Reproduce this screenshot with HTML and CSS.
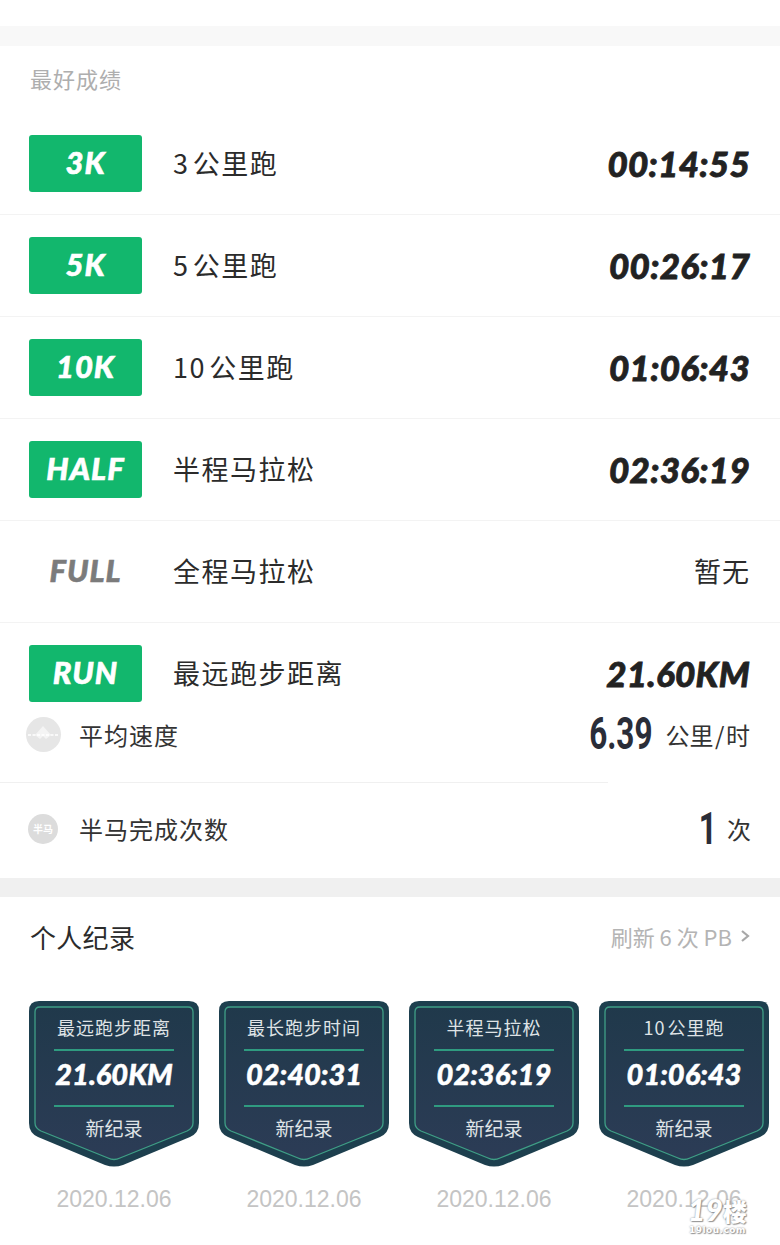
FILE: index.html
```html
<!DOCTYPE html>
<html lang="zh-CN">
  <head>
    <meta charset="UTF-8" />
    <meta name="viewport" content="width=device-width, initial-scale=1.0" />
    <title>最好成绩</title>
    <link rel="stylesheet" href="styles.css">
  </head>
  <body>
    <div class="top-space"></div>
    <div class="band"></div>

    <section class="best">
      <h2 class="best-title">最好成绩</h2>

      <div class="row">
        <span class="tag">3K</span>
        <span class="row-name">3&#8202;公里跑</span>
        <span class="row-value">00:14:55</span>
      </div>
      <div class="row">
        <span class="tag">5K</span>
        <span class="row-name">5&#8202;公里跑</span>
        <span class="row-value">00:26:17</span>
      </div>
      <div class="row">
        <span class="tag">10K</span>
        <span class="row-name">10&#8202;公里跑</span>
        <span class="row-value">01:06:43</span>
      </div>
      <div class="row">
        <span class="tag">HALF</span>
        <span class="row-name">半程马拉松</span>
        <span class="row-value">02:36:19</span>
      </div>
      <div class="row">
        <span class="tag tag-off">FULL</span>
        <span class="row-name">全程马拉松</span>
        <span class="row-none">暂无</span>
      </div>
      <div class="row row-last">
        <span class="tag">RUN</span>
        <span class="row-name">最远跑步距离</span>
        <span class="row-value">21.60KM</span>
      </div>
    </section>

    <section class="stats">
      <div class="stat stat-line">
        <span class="dot dot-speed">
          <svg width="35" height="35" viewBox="0 0 35 35">
            <path d="M9 18 L17 9 L25 18 L20 22 L17 19 L14 22 Z" fill="#fff" opacity="0.55" />
            <path d="M2 18 H33" fill="none" stroke="#fff" stroke-width="1.3" stroke-dasharray="3 1.5" />
          </svg>
        </span>
        <span class="stat-name">平均速度</span>
        <span class="stat-value"><b class="stat-num">6.39</b><span class="stat-unit">公里&#8202;/&#8202;时</span></span>
      </div>
      <div class="stat stat-end">
        <span class="dot dot-half">半马</span>
        <span class="stat-name">半马完成次数</span>
        <span class="stat-value"><b class="stat-num">1</b><span class="stat-unit">次</span></span>
      </div>
    </section>

    <div class="band band-dark"></div>

    <section class="records">
      <div class="records-head">
        <h2 class="records-title">个人纪录</h2>
        <span class="records-more">刷新 6 次 PB
          <svg width="10" height="14" viewBox="0 0 10 14"><path d="M2 2 L8 7 L2 12" fill="none" stroke="#a8a8a8" stroke-width="2.2" /></svg>
        </span>
      </div>

      <div class="cards">
        <div class="card">
          <div class="shield">
            <svg class="shield-bg" width="170" height="166" viewBox="0 0 170 166">
              <defs>
                <linearGradient id="shieldFill" x1="0" y1="0" x2="0" y2="1">
                  <stop offset="0" stop-color="#20394b" />
                  <stop offset="1" stop-color="#2c3c56" />
                </linearGradient>
              </defs>
              <path d="M10 0 H160 Q170 0 170 10 V122 Q170 132 161 136 L94 164 Q85 167 76 164 L9 136 Q0 132 0 122 V10 Q0 0 10 0 Z" fill="#1d3f4e" />
              <path d="M11 6 H159 Q164 6 164 11 V122 Q164 127 158 130 L91 157 Q85 160 79 157 L12 130 Q6 127 6 122 V11 Q6 6 11 6 Z" fill="url(#shieldFill)" stroke="#3f9f86" stroke-width="1.3" />
            </svg>
            <div class="shield-title">最远跑步距离</div>
            <div class="shield-value">21.60KM</div>
            <div class="shield-new">新纪录</div>
          </div>
          <div class="card-date">2020.12.06</div>
        </div>

        <div class="card">
          <div class="shield">
            <svg class="shield-bg" width="170" height="166" viewBox="0 0 170 166">
              <path d="M10 0 H160 Q170 0 170 10 V122 Q170 132 161 136 L94 164 Q85 167 76 164 L9 136 Q0 132 0 122 V10 Q0 0 10 0 Z" fill="#1d3f4e" />
              <path d="M11 6 H159 Q164 6 164 11 V122 Q164 127 158 130 L91 157 Q85 160 79 157 L12 130 Q6 127 6 122 V11 Q6 6 11 6 Z" fill="url(#shieldFill)" stroke="#3f9f86" stroke-width="1.3" />
            </svg>
            <div class="shield-title">最长跑步时间</div>
            <div class="shield-value">02:40:31</div>
            <div class="shield-new">新纪录</div>
          </div>
          <div class="card-date">2020.12.06</div>
        </div>

        <div class="card">
          <div class="shield">
            <svg class="shield-bg" width="170" height="166" viewBox="0 0 170 166">
              <path d="M10 0 H160 Q170 0 170 10 V122 Q170 132 161 136 L94 164 Q85 167 76 164 L9 136 Q0 132 0 122 V10 Q0 0 10 0 Z" fill="#1d3f4e" />
              <path d="M11 6 H159 Q164 6 164 11 V122 Q164 127 158 130 L91 157 Q85 160 79 157 L12 130 Q6 127 6 122 V11 Q6 6 11 6 Z" fill="url(#shieldFill)" stroke="#3f9f86" stroke-width="1.3" />
            </svg>
            <div class="shield-title">半程马拉松</div>
            <div class="shield-value">02:36:19</div>
            <div class="shield-new">新纪录</div>
          </div>
          <div class="card-date">2020.12.06</div>
        </div>

        <div class="card">
          <div class="shield">
            <svg class="shield-bg" width="170" height="166" viewBox="0 0 170 166">
              <path d="M10 0 H160 Q170 0 170 10 V122 Q170 132 161 136 L94 164 Q85 167 76 164 L9 136 Q0 132 0 122 V10 Q0 0 10 0 Z" fill="#1d3f4e" />
              <path d="M11 6 H159 Q164 6 164 11 V122 Q164 127 158 130 L91 157 Q85 160 79 157 L12 130 Q6 127 6 122 V11 Q6 6 11 6 Z" fill="url(#shieldFill)" stroke="#3f9f86" stroke-width="1.3" />
            </svg>
            <div class="shield-title">10&#8202;公里跑</div>
            <div class="shield-value">01:06:43</div>
            <div class="shield-new">新纪录</div>
          </div>
          <div class="card-date">2020.12.06</div>
        </div>
      </div>
    </section>

    <!-- 水印 -->
    <div class="mark">
      <div class="mark-big">19<span class="mark-cn">楼</span></div>
      <div class="mark-small">19lou.com</div>
    </div>
  </body>
</html>
```

FILE: styles.css
```css
body {
  font-family: "Noto Sans CJK SC", "Noto Sans", sans-serif;
  background-color: white;
  color: #2b2b2b;
  margin: 0;
  padding: 0;
  width: 780px;
  height: 1245px;
  overflow: hidden;
  position: relative;
}

h2 {
  margin: 0;
  font-weight: normal;
}

.top-space {
  height: 26px;
}

.band {
  height: 20px;
  background-color: #f8f8f8;
}

.band-dark {
  height: 19px;
  background-color: #f0f0f0;
}

/* 最好成绩 */
.best-title {
  height: 67px;
  padding-left: 30px;
  box-sizing: border-box;
  font-size: 22px;
  line-height: 65px;
  letter-spacing: 1px;
  color: #aeaeae;
}

.row {
  height: 102px;
  box-sizing: border-box;
  border-bottom: 1px solid #f3f3f3;
  padding: 0 30px 0 29px;
  display: flex;
  align-items: center;
}

.row-last {
  height: 79px;
  border-bottom: none;
  padding-top: 22px;
}

.tag {
  width: 113px;
  height: 57px;
  border-radius: 3px;
  background-color: #12b76d;
  color: white;
  font-family: "Lato", sans-serif;
  font-weight: 900;
  font-style: italic;
  font-size: 31px;
  line-height: 55px;
  letter-spacing: 1px;
  -webkit-text-stroke: 0.6px currentColor;
  text-align: center;
  flex-shrink: 0;
}

.tag-off {
  background-color: transparent;
  color: #7b7b7b;
}

.row-name {
  margin: 0 0 2px 31px;
  font-size: 27px;
  letter-spacing: 1.5px;
  line-height: 40px;
}

.row-value {
  margin: 0 0 2px auto;
  font-family: "Lato", sans-serif;
  font-weight: 900;
  font-style: italic;
  font-size: 35px;
  letter-spacing: 0.3px;
  -webkit-text-stroke: 0.8px currentColor;
  color: #222;
}

.row-none {
  margin: 0 0 2px auto;
  font-size: 27px;
  letter-spacing: 1px;
}

/* 平均速度 */
.stat {
  height: 95px;
  box-sizing: border-box;
  padding: 0 30px 0 26px;
  display: flex;
  align-items: center;
  position: relative;
}

.stat-line {
  height: 81px;
  padding-bottom: 17px;
}

.stat-end {
  padding: 0 29px 4px 26px;
}

/* la linea se corta antes del borde, igual que en la captura */
.stat-line::after {
  content: "";
  position: absolute;
  left: 0;
  bottom: 0;
  width: 608px;
  height: 1px;
  background-color: #f0f0f0;
}

.dot {
  width: 35px;
  height: 35px;
  border-radius: 50%;
  flex-shrink: 0;
  display: flex;
  align-items: center;
  justify-content: center;
}

.dot-speed {
  background-color: #e6e6e6;
}

.dot-half {
  width: 30px;
  height: 30px;
  margin: 0 3px 0 2px;
  background-color: #dcdcdc;
  color: white;
  font-size: 10px;
  font-weight: bold;
}

.stat-name {
  margin-left: 18px;
  font-size: 24px;
  letter-spacing: 1px;
  color: #333;
}

.stat-value {
  margin-left: auto;
  display: flex;
  align-items: center;
}

.stat-num {
  font-family: "Roboto", sans-serif;
  font-weight: bold;
  font-size: 45px;
  line-height: 50px;
  color: #2a2d38;
  transform: scaleX(0.7);
  transform-origin: right center;
}

.stat-unit {
  margin-left: 13px;
  font-size: 24px;
  color: #333;
}

.stat-end .stat-unit {
  margin-left: 10px;
}

/* 个人纪录 */
.records-head {
  height: 104px;
  box-sizing: border-box;
  padding: 0 30px 26px;
  display: flex;
  align-items: center;
  justify-content: space-between;
}

.records-title {
  font-size: 26px;
  letter-spacing: 0.3px;
  color: #2b2b2b;
}

.records-more {
  font-size: 22px;
  color: #b4b4b4;
  display: flex;
  align-items: center;
  gap: 8px;
}

.cards {
  display: flex;
  gap: 20px;
  padding-left: 29px;
}

.card {
  width: 170px;
}

.shield {
  height: 166px;
  position: relative;
  color: #dfe3e6;
  text-align: center;
}

.shield-bg {
  position: absolute;
  top: 0;
  left: 0;
}

.shield-title,
.shield-value,
.shield-new {
  position: relative;
  margin: 0 25px;
}

.shield-title {
  height: 50px;
  box-sizing: border-box;
  padding-top: 11px;
  font-size: 18px;
  line-height: 30px;
  letter-spacing: 1px;
  white-space: nowrap;
  border-bottom: 2px solid #2f9b80;
}

.shield-value {
  height: 56px;
  box-sizing: border-box;
  font-family: "Lato", sans-serif;
  font-weight: 900;
  font-style: italic;
  font-size: 29px;
  line-height: 46px;
  -webkit-text-stroke: 0.5px currentColor;
  color: white;
  white-space: nowrap;
  border-bottom: 2px solid #2f9b80;
}

.shield-new {
  font-size: 19px;
  line-height: 42px;
}

.card-date {
  margin-top: 17px;
  font-family: "Liberation Sans", sans-serif;
  font-size: 23px;
  line-height: 30px;
  color: #c4c4c4;
  text-align: center;
}

/* 水印 */
.mark {
  position: absolute;
  left: 688px;
  top: 1195px;
  color: white;
  text-shadow: 0 0 2px #888, 1px 1px 1px #999;
  text-align: center;
}

.mark-big {
  height: 28px;
  font-family: "Lato", sans-serif;
  font-weight: 900;
  font-style: italic;
  font-size: 30px;
  line-height: 28px;
}

.mark-cn {
  font-family: "Noto Sans CJK SC", sans-serif;
  font-size: 24px;
  font-style: normal;
}

.mark-small {
  margin-top: 3px;
  font-family: "DejaVu Sans", sans-serif;
  font-weight: bold;
  font-size: 9px;
  line-height: 9px;
  letter-spacing: 0.5px;
}
```
